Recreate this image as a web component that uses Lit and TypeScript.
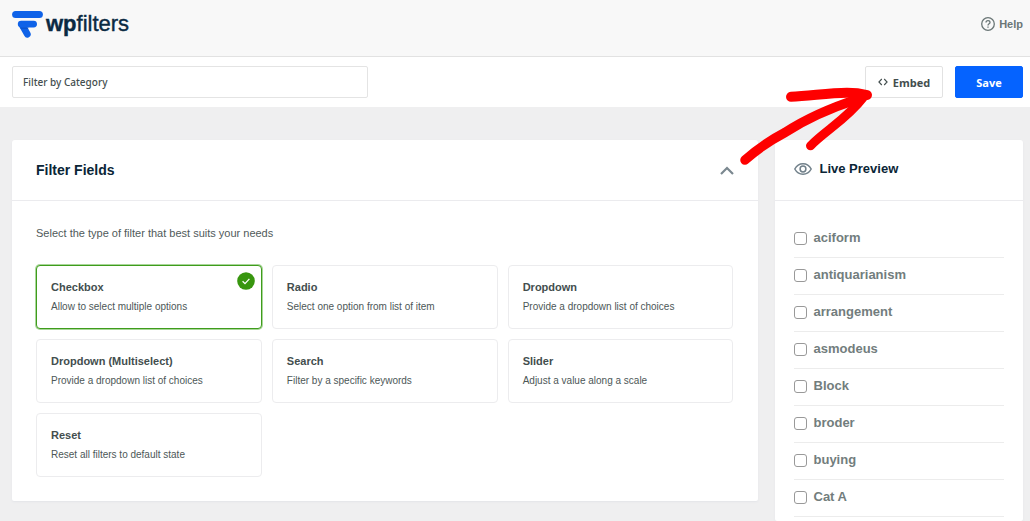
import { LitElement, html, css } from "lit";
import { customElement, state } from "lit/decorators.js";
import { classMap } from "lit/directives/class-map.js";

interface FilterType {
  name: string;
  text: string;
}

const FILTER_TYPES: FilterType[] = [
  { name: "Checkbox", text: "Allow to select multiple options" },
  { name: "Radio", text: "Select one option from list of item" },
  { name: "Dropdown", text: "Provide a dropdown list of choices" },
  { name: "Dropdown (Multiselect)", text: "Provide a dropdown list of choices" },
  { name: "Search", text: "Filter by a specific keywords" },
  { name: "Slider", text: "Adjust a value along a scale" },
  { name: "Reset", text: "Reset all filters to default state" },
];

const CATEGORIES = ["aciform", "antiquarianism", "arrangement", "asmodeus", "Block", "broder", "buying", "Cat A"];

@customElement("filter-type-card")
class FilterTypeCard extends LitElement {
  static properties = {
    name: { type: String },
    text: { type: String },
    selected: { type: Boolean },
  };
  declare name: string;
  declare text: string;
  declare selected: boolean;

  static styles = css`
    :host { display: block; }
    .card {
      position: relative;
      box-sizing: border-box;
      display: flex;
      flex-direction: column;
      gap: 6px;
      width: 100%;
      padding: 14px;
      border: 1px solid #ececee;
      border-radius: 4px;
      background: #fff;
      font-family: "Liberation Sans", Arial, sans-serif;
      text-align: left;
      cursor: pointer;
    }
    .selected { border-color: #3f9c1c; box-shadow: 0 0 0 1px #a9d69a; }
    .name { font-size: 11px; line-height: 14px; font-weight: 700; color: #434e4e; }
    .text { font-size: 10px; line-height: 14px; color: #4d5757; }
    .tick { position: absolute; top: 6px; right: 6px; width: 18px; height: 18px; }
  `;

  render() {
    return html`
      <button class=${classMap({ card: true, selected: this.selected })} aria-pressed=${this.selected ? "true" : "false"}>
        <span class="name">${this.name}</span>
        <span class="text">${this.text}</span>
        ${this.selected
          ? html`<svg class="tick" viewBox="0 0 18 18" aria-hidden="true">
              <circle cx="9" cy="9" r="8.8" fill="#38960f" />
              <path d="M5.6 9.3 8 11.6 12.4 6.9" fill="none" stroke="#fff" stroke-width="1.3" />
            </svg>`
          : ""}
      </button>
    `;
  }
}

@customElement("app-root")
class AppRoot extends LitElement {
  @state() private selected = "Checkbox";

  static styles = css`
    :host {
      position: relative;
      display: flex;
      flex-direction: column;
      min-height: 100vh;
      background: #efeff0;
      color: #434e4e;
      font-family: "Liberation Sans", Arial, sans-serif;
    }
    .header {
      display: flex;
      align-items: center;
      justify-content: space-between;
      box-sizing: border-box;
      height: 57px;
      padding: 0 7px 8px 12px;
      background: #f8f8f8;
      border-bottom: 1px solid #e2e2e2;
    }
    .brand { display: flex; align-items: center; gap: 2px; color: #0a2a43; text-decoration: none; }
    .mark { width: 32px; height: 28px; }
    .word { font-size: 22px; line-height: 28px; font-weight: 400; -webkit-text-stroke: 0.4px #0a2a43; }
    .word b { font-weight: 700; }
    .help {
      display: flex;
      align-items: center;
      gap: 4px;
      color: #6a7676;
      font-size: 11px;
      font-weight: 700;
      text-decoration: none;
    }
    .help svg { width: 14px; height: 14px; }

    .toolbar {
      display: flex;
      align-items: center;
      gap: 12px;
      padding: 9px 7px 9px 12px;
      background: #fff;
    }
    .title {
      box-sizing: border-box;
      flex: 0 1 356px;
      min-width: 0;
      height: 32px;
      margin: 0 auto 0 0;
      padding: 0 10px;
      border: 1px solid #e4e4e4;
      border-radius: 2px;
      font: 500 10px "Noto Sans", sans-serif;
      color: #434e4e;
    }
    .button {
      display: flex;
      align-items: center;
      justify-content: center;
      gap: 5px;
      box-sizing: border-box;
      height: 32px;
      border: 1px solid #e2e2e2;
      border-radius: 2px;
      background: #fff;
      color: #434e4e;
      font: 700 11px "Open Sans", "Noto Sans", sans-serif;
    }
    .embed { width: 78px; }
    .embed svg { width: 10px; height: 8px; }
    .save { width: 68px; background: #0563ff; border-color: #0563ff; color: #fff; }

    .main {
      flex: 1;
      display: grid;
      grid-template-columns: 3fr 1fr;
      gap: 17px;
      padding: 33px 7px 0 12px;
    }
    .panel { background: #fff; border-radius: 3px 3px 2px 2px; box-shadow: 0 1px 2px #e3e4e8; }
    .fields { align-self: start; }
    .head {
      display: flex;
      align-items: center;
      box-sizing: border-box;
      height: 61px;
      padding: 0 24px;
      border-bottom: 1px solid #ebebee;
      color: #0a2536;
    }
    .head h2 { margin: 0; font-size: 14px; line-height: 16px; font-weight: 700; }
    .toggle { display: flex; margin-left: auto; padding: 0; border: 0; background: none; }
    .toggle svg { width: 14px; height: 9px; }
    .preview .head { gap: 8px; padding: 0 19px 3px; }
    .preview .head h2 { font-size: 13px; }
    .preview .head svg { width: 18px; height: 12px; }
    .body { padding: 24px; }
    .intro { margin: 0 0 24px; font-size: 11px; line-height: 16px; color: #505a5a; }
    .types { display: grid; grid-template-columns: repeat(3, 1fr); gap: 10px; }

    .list { margin: 0; padding: 20px 19px 0; list-style: none; }
    .item { border-bottom: 1px solid #ececec; }
    .item label {
      display: flex;
      align-items: center;
      gap: 7px;
      padding: 9px 0 11px;
      font-size: 13px;
      line-height: 16px;
      font-weight: 700;
      color: #727d7d;
    }
    .item input {
      appearance: none;
      box-sizing: border-box;
      width: 13px;
      height: 13px;
      margin: 0;
      border: 1px solid #999;
      border-radius: 3px;
      background: #fff;
    }
    .item input:checked { background: #0563ff; }
    .arrow {
      position: absolute;
      top: 80px;
      right: 150px;
      width: 150px;
      height: 90px;
      pointer-events: none;
    }
  `;

  render() {
    return html`
      <header class="header">
        <a class="brand" href="#">
          <svg class="mark" viewBox="0 0 32 28" aria-hidden="true">
            <g fill="none" stroke="#0f62e8" stroke-linecap="round">
              <path d="M3.6 4.6H27.4" stroke-width="7" />
              <path d="M9.2 14.1H21.6" stroke-width="6.8" />
              <path d="M10.8 16 15.3 24.200" stroke-width="6.8" />
            </g>
            <path d="M8 17.500H17L15.500 19H8.800Z" fill="#0a4dbd" opacity=".6" />
          </svg>
          <span class="word"><b>wp</b>filters</span>
        </a>
        <a class="help" href="#">
          <svg viewBox="0 0 14 14" aria-hidden="true" fill="none" stroke="currentColor" stroke-width="1.3">
            <circle cx="7" cy="7" r="6.3" />
            <path d="M5 5.6C5 4.3 5.9 3.6 7 3.6s2 .7 2 1.8C9 6.8 7 6.8 7 8.4M7 9.4v1.3" />
          </svg>
          Help
        </a>
      </header>

      <div class="toolbar">
        <input class="title" type="text" aria-label="Filter name" .value=${"Filter by Category"} />
        <button class="button embed">
          <svg viewBox="0 0 10 8" aria-hidden="true" fill="none" stroke="currentColor" stroke-width="1.1">
            <path d="M3.8 1 .9 4l2.9 3M6.2 1l2.9 3-2.9 3" />
          </svg>
          Embed
        </button>
        <button class="button save">Save</button>
      </div>

      <main class="main">
        <section class="panel fields">
          <div class="head">
            <h2>Filter Fields</h2>
            <button class="toggle" aria-label="Collapse">
              <svg viewBox="0 0 14 9" aria-hidden="true">
                <path d="M1 8 7 2l6 6" fill="none" stroke="#7b8890" stroke-width="2.2" />
              </svg>
            </button>
          </div>
          <div class="body">
            <p class="intro">Select the type of filter that best suits your needs</p>
            <div class="types">
              ${FILTER_TYPES.map(
                (type) => html`<filter-type-card
                  .name=${type.name}
                  .text=${type.text}
                  .selected=${type.name === this.selected}
                  @click=${() => (this.selected = type.name)}
                ></filter-type-card>`
              )}
            </div>
          </div>
        </section>

        <aside class="panel preview">
          <div class="head">
            <svg viewBox="0 0 18 12" aria-hidden="true" fill="none" stroke="#71808a" stroke-width="1.5">
              <path d="M.8 6C2.6 2.6 5.5.8 9 .8S15.4 2.6 17.2 6C15.4 9.4 12.5 11.2 9 11.2S2.6 9.4.8 6Z" />
              <circle cx="9" cy="6" r="2.9" />
            </svg>
            <h2>Live Preview</h2>
          </div>
          <ul class="list">
            ${CATEGORIES.map(
              (name) => html`<li class="item"><label><input type="checkbox" />${name}</label></li>`
            )}
          </ul>
        </aside>
      </main>

      <svg class="arrow" viewBox="0 0 150 90" aria-hidden="true" fill="none" stroke="#fe0000" stroke-linecap="round" stroke-linejoin="round">
        <path d="M15 80Q33 64 55 52.500Q85 33 128 19" stroke-width="9.500" />
        <path d="M61 16.800C80 16 98 13 117 12.700C125 12.700 131 13.500 137 15" stroke-width="10" />
        <path d="M80.500 65.800C96 50 117 39 134 16.500" stroke-width="9" />
        <path d="M118 22 136 17 126 27Z" fill="#fe0000" stroke-width="3" />
      </svg>
    `;
  }
}
